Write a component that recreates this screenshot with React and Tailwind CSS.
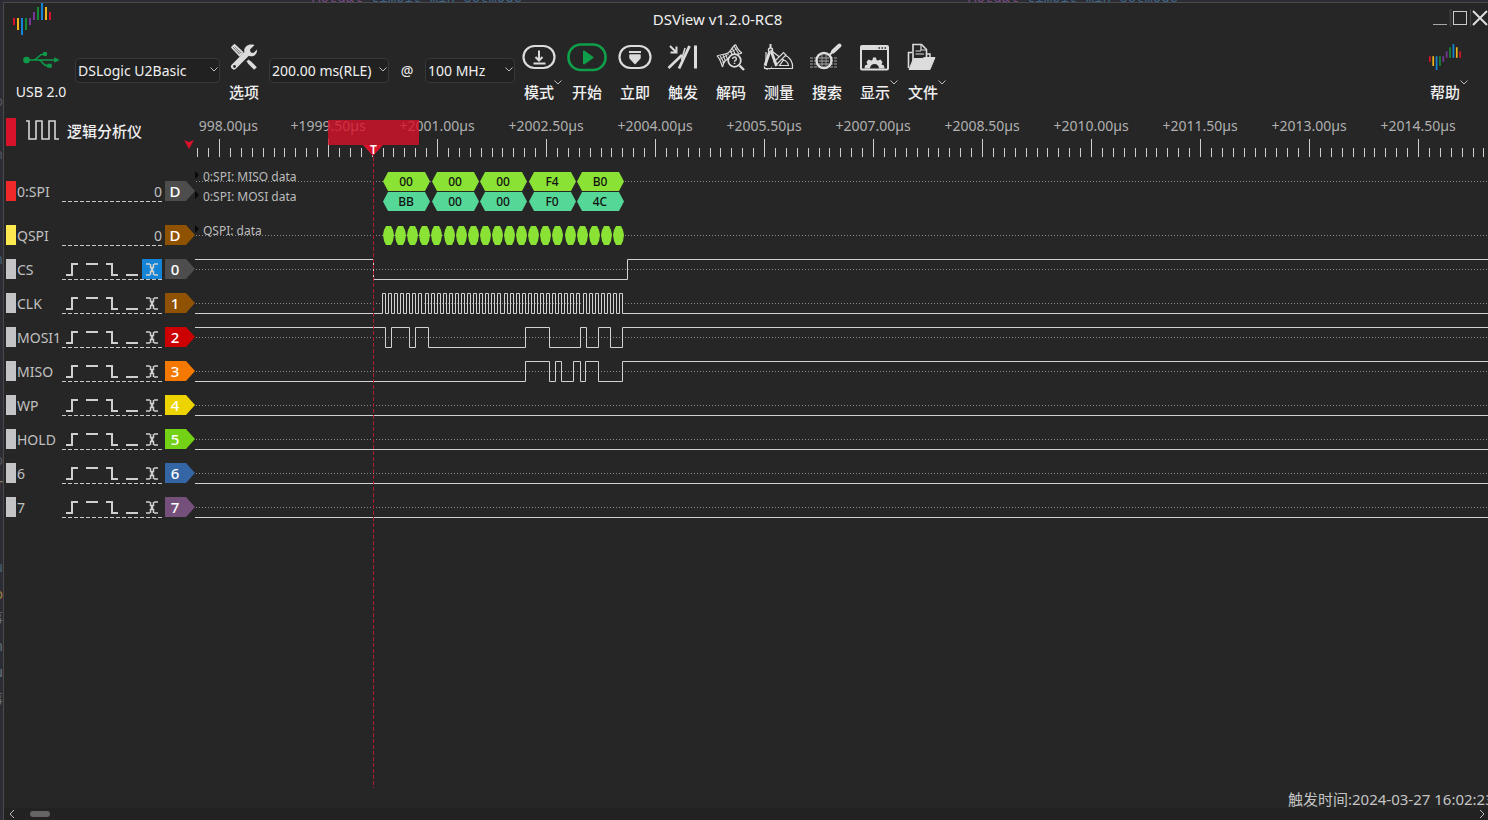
import React from 'react';

const LOGO_BARS = [
  [0, 15, 7, '#d7122b'], [4, 15, 12, '#f0b51c'], [8, 15, 17, '#1485d6'], [12, 15, 12, '#158a35'], [16, 15, 7, '#77359a'],
  [20, 9, 8, '#77359a'], [24, 4, 13, '#158a35'], [28, 0, 17, '#1485d6'], [32, 4, 13, '#f0b51c'], [36, 9, 8, '#d7122b'],
];

function Logo({ className }) {
  return (
    <svg className={className} viewBox="0 0 38 32" preserveAspectRatio="none" aria-hidden="true">
      {LOGO_BARS.map(([x, y, h, c]) => <rect key={x} x={x} y={y} width="2" height={h} fill={c} />)}
    </svg>
  );
}

function Icon({ children }) {
  return (
    <svg className="h-[30px] w-10 shrink-0" viewBox="0 0 40 30" fill="none" stroke="#dcdcdc" strokeWidth="2" aria-hidden="true">
      {children}
    </svg>
  );
}

const UsbIcon = () => (
  <Icon>
    <g stroke="#0f9a49" strokeWidth="1.5" fill="none">
      <path d="M5 18H35M12 18C17 18 17 12 23 12M17 18C22 18 21 24 27 24" />
      <circle cx="5.5" cy="18" r="2.6" fill="#0f9a49" />
      <circle cx="24" cy="12" r="1.5" fill="#0f9a49" />
      <path d="M27 22.500h3v2.500h-3zM34 16.500l3 1.500-3 1.500z" fill="#0f9a49" />
    </g>
  </Icon>
);

const ToolsIcon = () => (
  <Icon>
    <path d="M10 24.500L23.500 11" strokeWidth="6" strokeLinecap="round" />
    <path d="M30.500 3L26 7.500l.5 3 3 .5L33 7.500C33.500 12 30 15.500 25 14L20.500 10C19 5.500 24 1 30.500 3z" fill="#dcdcdc" stroke="none" />
    <circle cx="10.500" cy="24.500" r="1.400" fill="#262626" stroke="none" />
    <path d="M8 5.500L10.500 3 18.500 10.500 15.500 13.500z" strokeWidth="1.800" strokeLinejoin="round" />
    <path d="M10 5L17 12" strokeWidth="1.200" />
    <path d="M23.500 18.500L25.500 20.500" strokeWidth="3" />
    <path d="M25 20L31.500 26.500" strokeWidth="3.800" />
  </Icon>
);

const ModeIcon = () => (
  <Icon>
    <rect x="4.500" y="4" width="31" height="22" rx="11" strokeWidth="2.200" />
    <path d="M20 8.500V18M16.500 15L20 18.500 23.500 15M14.500 21.500H26.500" strokeWidth="2" />
  </Icon>
);

const StartIcon = () => (
  <Icon>
    <rect x="1.500" y="2.500" width="37" height="25.500" rx="12.500" stroke="#0f9f4a" strokeWidth="2.700" />
    <path d="M17 9.500L25.500 15.500 17 21.500z" fill="#0f9f4a" stroke="#0f9f4a" strokeWidth="2" strokeLinejoin="round" />
  </Icon>
);

const InstantIcon = () => (
  <Icon>
    <rect x="4.500" y="4" width="31" height="22" rx="11" strokeWidth="2.200" />
    <path d="M14 10H26" />
    <path d="M15 13H25V16L20 21.500 15 16z" fill="#dcdcdc" strokeWidth="1.500" strokeLinejoin="round" />
  </Icon>
);

const TriggerIcon = () => (
  <Icon>
    <path d="M7 4L12.500 9.500M13.500 4.500V10.500H7.500" strokeWidth="2" />
    <path d="M5.500 26L19 13" strokeWidth="2.600" />
    <path d="M16 26.500L26.500 4" strokeWidth="2.800" />
    <path d="M22 6L18.500 18" strokeWidth="1.500" />
    <path d="M32.500 3.500V26.500" strokeWidth="3" />
  </Icon>
);

const DecodeIcon = () => (
  <Icon>
    <g strokeWidth="1.200">
      <path d="M6 14C10 12 14 13 17 11S21 5 24.500 2.500" />
      <path d="M11.500 25C13 19 14 19 18 16S25 13 31 11" />
      <path d="M6 14C9 16 10 21 11.500 25M24.500 2.500C26 6 28 9 31 11" />
      <path d="M9 13.500L13 21M12 13L14.500 19M14.500 12.500L16.500 17M19.500 8.500L21.500 13.500M21 5.500L24.500 13M23 4L28 12" strokeWidth="1.100" />
      <path d="M8.500 17.500L18 12M10.500 21.500L19 15M19 10.500L26.500 6.500" strokeWidth="0.800" />
    </g>
    <circle cx="23.500" cy="18.500" r="6.300" fill="#262626" strokeWidth="1.800" />
    <path d="M28.500 23.500L33 28" strokeWidth="2.400" />
    <path d="M21.700 17a1.800 1.800 0 1 1 2.400 1.600c-.6.300-.6.600-.6 1.200M23.500 20.800v1.200" strokeWidth="1.500" />
  </Icon>
);

const MeasureIcon = () => (
  <Icon>
    <g strokeWidth="1.200">
      <path d="M11.500 8L25 18.500M25 13A12 12 0 0 1 33.500 26.500H16.500M7 10V24M5 26.500H34" />
      <path d="M24.500 18A7 7 0 0 1 29.500 23.500H20.500z" />
      <path d="M15 20L24.500 10.500 27 13 18 22z" fill="#262626" />
      <path d="M5 24.500C7 28 10 28 13 25" strokeDasharray="2 1" />
    </g>
    <path d="M11.500 2V6" />
    <circle cx="11.500" cy="8" r="2" strokeWidth="1.500" />
    <path d="M10.500 10L6 23.500M12.500 10L17.500 24" strokeWidth="2.800" />
  </Icon>
);

const SearchIcon = () => (
  <Icon>
    <path d="M3 16H30M3 19H30M3 22H30M3 25H30" strokeWidth="1.800" stroke="#636363" strokeDasharray="3 1" />
    <circle cx="17" cy="18.500" r="7.500" fill="#262626" fillOpacity="0.500" strokeWidth="2.400" />
    <path d="M12 16H22M12 19H22M12 22H22M15 13V24M19 13V24" strokeWidth="1" stroke="#9a9a9a" />
    <path d="M22.500 13L26 9.500" strokeWidth="2" />
    <path d="M26 9.500L32.500 3.500" strokeWidth="4" strokeLinecap="round" />
  </Icon>
);

const DisplayIcon = () => (
  <Icon>
    <rect x="6" y="4" width="27" height="23.500" rx="1" strokeWidth="2" />
    <path d="M6 6H33" strokeWidth="4" />
    <path d="M23.500 6H25M26.500 6H28M29.500 6H31" stroke="#262626" strokeWidth="1.500" />
    <path d="M9.500 26.500L10 23.500 12.500 22.500 11.500 20 13.500 17.500 16 18.500 17.500 18 18 15.500H21L21.500 18 23 18.500 25.500 17.500 27.500 20 26.500 22.500 29 23.500 29.500 26.500H24A4.500 4.500 0 0 0 15 26.500z" fill="#dcdcdc" stroke="none" />
  </Icon>
);

const FileIcon = () => (
  <Icon>
    <path d="M5.500 26V10.500H9M10 20V2.500H18.500L23.500 7.500V17" strokeWidth="1.600" />
    <path d="M18 3V8H23M12.500 9H18M12.500 12H21" strokeWidth="1.200" />
    <path d="M23.500 12H27V16" strokeWidth="1.500" />
    <path d="M10.500 16.500H19L22 15.500H32L27 27.500H6z" fill="#dcdcdc" strokeWidth="1" strokeLinejoin="round" />
  </Icon>
);

function Chevron({ className }) {
  return (
    <svg className={className} viewBox="0 0 8 5" fill="none" stroke="#bdbdbd" aria-hidden="true">
      <path d="M0.500 0.500L4 4 7.500 0.500" />
    </svg>
  );
}

function ToolButton({ label, icon, menu }) {
  return (
    <button type="button" className="flex w-12 shrink-0 flex-col items-center gap-[10px]">
      {icon}
      <span className="relative font-medium leading-5">
        {label}
        {menu && <Chevron className="absolute -right-2 -top-0.5 h-[5px] w-2" />}
      </span>
    </button>
  );
}

function Picker({ label, value, className }) {
  return (
    <div className={`relative mt-4 h-[25px] shrink-0 ${className}`}>
      <select aria-label={label} defaultValue={value} className="h-full w-full appearance-none rounded-sm border border-[#383838] bg-[#212121] pl-0.5 text-sm text-[#f0f0f0]">
        <option>{value}</option>
      </select>
      <Chevron className="pointer-events-none absolute right-0.5 top-[9px] h-[5px] w-2" />
    </div>
  );
}

const TOOLS = [
  ['模式', <ModeIcon />, true],
  ['开始', <StartIcon />],
  ['立即', <InstantIcon />],
  ['触发', <TriggerIcon />],
  ['解码', <DecodeIcon />],
  ['测量', <MeasureIcon />],
  ['搜索', <SearchIcon />],
  ['显示', <DisplayIcon />, true],
  ['文件', <FileIcon />, true],
];

/* Horizontal positions are measured from the left edge of the wave view. */
const ORIGIN = 195;
const FAR = 6000;

function edgesToPath(startHigh, edges) {
  let high = startHigh;
  let d = `M0 ${high ? 7.5 : 27.5}`;
  for (const x of edges) {
    high = !high;
    d += `H${x - ORIGIN + 0.5}V${high ? 7.5 : 27.5}`;
  }
  return `${d}H${FAR}`;
}

const CLOCK = Array.from({ length: 80 }, (_, i) => Math.round(382 + i * 3.038));

const CHANNELS = [
  { name: 'CS', index: 0, color: 'bg-[#4d4d4d]', high: true, edges: [373, 627], active: 4 },
  { name: 'CLK', index: 1, color: 'bg-[#8f5202]', high: false, edges: CLOCK },
  { name: 'MOSI1', index: 2, color: 'bg-[#cc0000]', high: true, edges: [385, 391, 409, 415, 428, 525, 549, 580, 586, 598, 610, 622] },
  { name: 'MISO', index: 3, color: 'bg-[#f57900]', high: false, edges: [525, 549, 555, 561, 573, 580, 585, 598, 622] },
  { name: 'WP', index: 4, color: 'bg-[#edd400]', high: false, edges: [] },
  { name: 'HOLD', index: 5, color: 'bg-[#73d216]', high: false, edges: [] },
  { name: '6', index: 6, color: 'bg-[#3465a4]', high: false, edges: [] },
  { name: '7', index: 7, color: 'bg-[#75507b]', high: false, edges: [] },
];

const TRIGGERS = [
  ['上升沿', 'M4 16H10V5H16'],
  ['高电平', 'M4 5H16'],
  ['下降沿', 'M4 5H10V16H16'],
  ['低电平', 'M4 16H16'],
  ['双边沿', 'M4 5H8M12 5H16M4 16H8M12 16H16M8.500 5V8.500H9.500V12.500H8.500V16M11.500 5V8.500H10.500V12.500H11.500V16'],
];

function Underline() {
  return (
    <svg className="h-px w-[100px]" aria-hidden="true">
      <path d="M0 0.500H100" stroke="#c8c8c8" strokeDasharray="4 2" />
    </svg>
  );
}

function Tag({ text, color }) {
  return (
    <div className={`ml-[3px] h-5 w-[30px] text-[15px] font-medium leading-[21px] text-white [clip-path:polygon(0_0,70%_0,100%_50%,70%_100%,0_100%)] ${color}`}>
      <div className="w-5 text-center">{text}</div>
    </div>
  );
}

function RowHead({ name, swatch, children, tag, color }) {
  return (
    <div className="flex w-[191px] shrink-0 items-center pl-0.5">
      <div className={`h-5 w-[10px] ${swatch}`} />
      <div className="ml-px w-[45px] whitespace-nowrap pt-0.5 text-sm leading-5 text-[#c0c0c0]">{name}</div>
      <div className="flex w-[100px] flex-col">
        {children}
        <div className="-mb-px h-px">
          <Underline />
        </div>
      </div>
      <Tag text={tag} color={color} />
    </div>
  );
}

const Dots = ({ y }) => <path d={`M1 ${y}H${FAR}`} stroke="#8c8c8c" strokeDasharray="1 2" />;

function ChannelRow({ ch }) {
  return (
    <div className="flex h-[34px]">
      <RowHead name={ch.name} swatch="bg-[#c4c4c6]" tag={ch.index} color={ch.color}>
        <div className="flex">
          {TRIGGERS.map(([label, d], i) => (
            <button key={label} type="button" aria-label={`${ch.name} ${label}`} className={ch.active === i ? 'h-5 w-5 bg-[#1485d6]' : 'h-5 w-5'}>
              <svg className="h-5 w-5" viewBox="0 0 20 20" fill="none" stroke="#cfcfcf" strokeWidth={i === 4 ? 1.5 : 2} aria-hidden="true">
                <path d={d} />
              </svg>
            </button>
          ))}
        </div>
      </RowHead>
      <svg className="h-[34px] w-0 min-w-0 flex-1" fill="none" aria-hidden="true">
        <Dots y={17.5} />
        <path d={edgesToPath(ch.high, ch.edges)} stroke="#d2d2d2" />
      </svg>
    </div>
  );
}

function hex(x1, x2, y1, y2, inset) {
  const m = (y1 + y2) / 2;
  return `${x1},${m} ${x1 + inset},${y1} ${x2 - inset},${y1} ${x2},${m} ${x2 - inset},${y2} ${x1 + inset},${y2}`;
}

function capsule(x1, x2, y1, y2) {
  return `${x1},${y1 + 9} ${x1 + 1},${y1 + 4} ${x1 + 3},${y1} ${x2 - 3},${y1} ${x2 - 1},${y1 + 4} ${x2},${y1 + 9} ${x2 - 1},${y2 - 4} ${x2 - 3},${y2} ${x1 + 3},${y2} ${x1 + 1},${y2 - 4}`;
}

const MISO_DATA = ['00', '00', '00', 'F4', 'B0'];
const MOSI_DATA = ['BB', '00', '00', 'F0', '4C'];

function DataLine({ values, y, fill }) {
  return values.map((v, i) => {
    const x = 188 + Math.round(i * 48.5);
    return (
      <g key={i}>
        <polygon points={hex(x, x + 47, y, y + 19, 5)} fill={fill} />
        <text x={x + 23} y={y + 14} textAnchor="middle" fontSize="12" fontWeight="500" fill="#111111">{v}</text>
      </g>
    );
  });
}

const Caption = ({ y, children }) => (
  <g>
    <path d={`M0 ${y - 10}l4 4-4 4z`} fill="#080808" />
    <text x="8" y={y} fontSize="12" fill="#bcbcbc">{children}</text>
  </g>
);

const RULER = ['', '+1999.50µs', '+2001.00µs', '+2002.50µs', '+2004.00µs', '+2005.50µs', '+2007.00µs', '+2008.50µs', '+2010.00µs', '+2011.50µs', '+2013.00µs', '+2014.50µs'];
const TICKS = Array.from({ length: 122 }, (_, i) => i - 2);

function Ruler() {
  return (
    <svg className="h-[52px] w-0 min-w-0 flex-1" aria-hidden="true">
      <g fill="#b0b0b0" fontSize="14">
        <text x="63" y="19" textAnchor="end">998.00µs</text>
        {RULER.map((t, i) => <text key={i} x={24 + i * 109} y="19" textAnchor="middle">{t}</text>)}
      </g>
      {TICKS.map((i) => (
        <rect key={i} x={Math.round(24 + i * 10.9)} y={i % 10 === 0 ? 27 : 36} width="1" height={i % 10 === 0 ? 18 : 9} fill="#cfcfcf" />
      ))}
      <rect x="133" y="8" width="91" height="25" fill="#d7122b" fillOpacity="0.800" />
      <path d="M168 33H188L178 44z" fill="#d7122b" />
      <text x="178.500" y="42" textAnchor="middle" fontSize="12" fontWeight="600" fill="#ffffff">T</text>
    </svg>
  );
}

const counterClass = 'h-5 pt-px text-right text-sm leading-5 text-[#c0c0c0]';

/* Slivers of the editor window that stays visible behind this one. */
const SIDE_GLYPHS = [[104, 'o', '#55565c'], [157, 'n', '#55565c'], [262, 'n', '#4b6272'], [463, 'o', '#55565c'], [489, 'T', '#857a5c'], [570, 'u', '#4b6272'], [597, 'o', '#a08040'], [621, '事', '#66707a'], [649, 'n', '#66707a'], [675, 'u', '#66707a'], [702, '事', '#66707a']];

function EditorLine() {
  return (
    <span className="whitespace-pre"><span className="text-[#7a4a82]">Actual</span> timeit min setmode</span>
  );
}

export default function App() {
  return (
    <div className="flex min-h-screen flex-col overflow-hidden bg-[#2c2c34] font-['Noto_Sans','Noto_Sans_CJK_SC',sans-serif] text-[15px] text-[#f0f0f0]">
      <div className="flex h-0.5 items-end overflow-hidden pl-[312px] font-['Liberation_Mono',monospace] text-[14px] leading-[8px] text-[#3f6888]" aria-hidden="true">
        <div className="w-[656px] shrink-0"><EditorLine /></div>
        <EditorLine />
      </div>
      <div className="flex flex-1">
        <svg className="w-[3px] shrink-0 self-stretch overflow-hidden" aria-hidden="true">
          {SIDE_GLYPHS.map(([y, t, c]) => <text key={y} x="3" y={y} textAnchor="end" fontSize="14" fill={c}>{t}</text>)}
        </svg>
        <div className="flex min-w-0 flex-1 flex-col border-l border-t border-[#4a4a4c] bg-[#262626]">
          <header className="flex h-[35px] items-start">
            <Logo className="ml-[9px] h-8 w-[38px] shrink-0" />
            <h1 className="flex-1 pr-[49px] pt-1.5 text-center text-[15px] leading-5">DSView v1.2.0-RC8</h1>
            <div className="flex shrink-0 pt-1.5">
              <button type="button" aria-label="最小化" className="h-[18px] w-[19px]">
                <svg className="h-[18px] w-[19px]" viewBox="0 0 19 18"><path d="M0 15.500H14M17.500 1V17" stroke="#a8a8a8" /><path d="M17.500 0V18" stroke="#3a3a3a" strokeWidth="2" /></svg>
              </button>
              <button type="button" aria-label="最大化" className="h-[18px] w-5">
                <svg className="h-[18px] w-5" viewBox="0 0 20 18" fill="none"><rect x="1.500" y="2.500" width="13" height="13" stroke="#cccccc" /><path d="M18.500 0V18" stroke="#444444" /></svg>
              </button>
              <button type="button" aria-label="关闭" className="h-[18px] w-4">
                <svg className="h-[18px] w-4" viewBox="0 0 16 18"><path d="M1 2L15 16M15 2L1 16" stroke="#dddddd" strokeWidth="2" /></svg>
              </button>
            </div>
          </header>

          <nav className="flex h-[74px] items-start pt-1">
            <div className="ml-[3px] flex w-[68px] shrink-0 flex-col items-center gap-[10px]">
              <UsbIcon />
              <span className="text-sm leading-5">USB 2.0</span>
            </div>
            <Picker label="设备" value="DSLogic U2Basic" className="w-[145px]" />
            <ToolButton label="选项" icon={<ToolsIcon />} />
            <Picker label="采样时长" value="200.00 ms(RLE)" className="ml-px w-[120px]" />
            <span className="mt-[19px] w-9 shrink-0 text-center text-sm leading-5">@</span>
            <Picker label="采样率" value="100 MHz" className="w-[90px]" />
            {TOOLS.map(([label, icon, menu]) => <ToolButton key={label} label={label} icon={icon} menu={menu} />)}
            <div className="ml-auto mr-[19px]">
              <ToolButton
                label="帮助"
                menu
                icon={<span className="flex h-[30px] items-center"><Logo className="h-[26px] w-8" /></span>}
              />
            </div>
          </nav>

          <main className="relative flex flex-1 flex-col">
            <div className="relative flex h-[52px]">
              <div className="flex w-[191px] shrink-0 items-start pl-0.5 pt-1.5">
                <div className="h-7 w-[10px] bg-[#d7122b]" />
                <svg className="ml-2.5 mt-px h-[22px] w-[34px]" viewBox="0 0 34 22" fill="none" stroke="#d6d6d6" strokeWidth="1.600" aria-hidden="true">
                  <path d="M0 2H3V20H10V2H16V20H23V2H29V20H33" />
                </svg>
                <span className="ml-[7px] pt-[3px] font-medium leading-5">逻辑分析仪</span>
              </div>
              <Ruler />
              <svg className="absolute left-[180px] top-7 h-2.5 w-2.5" viewBox="0 0 10 10" aria-hidden="true">
                <path d="M0 0L5 2 10 0 5 9z" fill="#d7122b" />
              </svg>
            </div>

            <div className="flex h-[54px]">
              <RowHead name="0:SPI" swatch="bg-[#ef2929]" tag="D" color="bg-[#4d4d4d]">
                <div className={counterClass}>0</div>
              </RowHead>
              <svg className="h-[54px] w-0 min-w-0 flex-1" aria-hidden="true">
                <Dots y={17.5} />
                <DataLine values={MISO_DATA} y={8} fill="#8ae234" />
                <DataLine values={MOSI_DATA} y={28} fill="#55d797" />
                <Caption y={17}>0:SPI: MISO data</Caption>
                <Caption y={37}>0:SPI: MOSI data</Caption>
              </svg>
            </div>
            <div className="flex h-[34px]">
              <RowHead name="QSPI" swatch="bg-[#fce94f]" tag="D" color="bg-[#8f5202]">
                <div className={counterClass}>0</div>
              </RowHead>
              <svg className="h-[34px] w-0 min-w-0 flex-1" aria-hidden="true">
                <Dots y={17.5} />
                {Array.from({ length: 20 }, (_, i) => {
                  const x = 188 + Math.round(i * 12.1);
                  return <polygon key={i} points={capsule(x, x + 11, 8, 27)} fill="#8ae234" />;
                })}
                <Caption y={17}>QSPI: data</Caption>
              </svg>
            </div>
            {CHANNELS.map((ch) => <ChannelRow key={ch.name} ch={ch} />)}

            <svg className="pointer-events-none absolute bottom-0 left-[369px] top-[45px] h-[calc(100%-45px)] w-px" aria-hidden="true">
              <path d="M0.500 0V4000" stroke="#b01c30" strokeDasharray="4 2" />
            </svg>
          </main>

          <footer>
            <div className="ml-auto h-5 w-[200px] overflow-hidden whitespace-nowrap text-[15px] leading-[22px] text-[#c4c4c4]">触发时间:2024-03-27 16:02:23</div>
            <div className="flex h-3 items-center justify-between bg-[#222222] px-[5px]">
              <svg className="h-2 w-1.5" viewBox="0 0 6 8" fill="none" stroke="#bdbdbd" aria-hidden="true"><path d="M5 0L1 4 5 8" /></svg>
              <div className="flex-1 px-[15px]"><div className="h-1.5 w-5 rounded-full bg-[#656565]" /></div>
              <svg className="-mr-0.5 h-2 w-1.5" viewBox="0 0 6 8" fill="none" stroke="#bdbdbd" aria-hidden="true"><path d="M1 0L5 4 1 8" /></svg>
            </div>
          </footer>
        </div>
      </div>
    </div>
  );
}
